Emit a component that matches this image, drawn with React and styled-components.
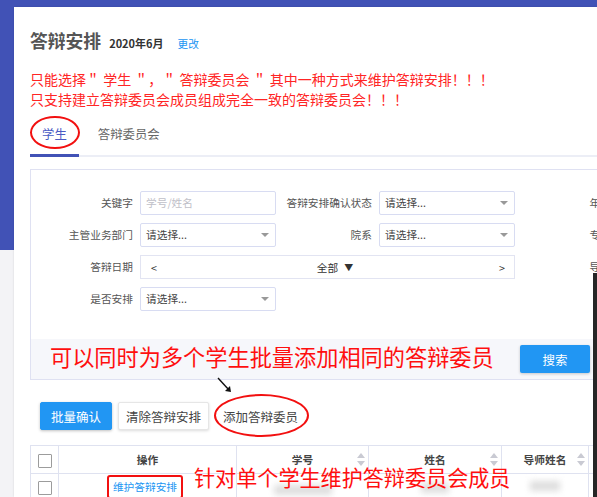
import React from "react";
import styled, { createGlobalStyle } from "styled-components";

const GlobalStyle = createGlobalStyle`
  html, body { margin: 0; padding: 0; }
  body {
    width: 597px;
    height: 497px;
    overflow: hidden;
    background: linear-gradient(#4152b6 0, #4152b6 250px, #f3f3f6 250px);
    font-family: "Noto Sans CJK SC", "Noto Sans", sans-serif;
  }
`;

const TopStrip = styled.div`
  height: 7px;
  overflow: hidden;
  padding-left: 26px;
`;

const Card = styled.div`
  margin-left: 14px;
  height: 490px;
  background: #fff;
  box-shadow: 0 0 2px rgba(0, 0, 0, 0.12);
  padding: 21px 0 0 16px;
  box-sizing: border-box;
  overflow: hidden;
`;

const TitleRow = styled.div`
  display: flex;
  align-items: baseline;
  height: 24px;
`;

const Title = styled.div`
  font-size: 17.8px;
  font-weight: bold;
  color: #555;
  line-height: 24px;
`;

const Month = styled.div`
  margin-left: 8px;
  font-size: 11px;
  font-weight: bold;
  color: #333;
`;

const EditLink = styled.a`
  margin-left: 14px;
  font-size: 10.7px;
  color: #2196f3;
`;

const Notice = styled.div`
  margin-top: 17px;
  font-size: 14px;
  line-height: 20px;
  color: #ff2525;
`;

const TabBar = styled.div`
  margin-top: 11px;
  display: flex;
  gap: 7px;
  border-bottom: 2px solid #eceef6;
`;

const Tab = styled.div`
  position: relative;
  padding: 5px 12px 11px;
  line-height: 18px;
  font-size: 12.4px;
  color: ${(p) => (p.$active ? "#4a5bc4" : "#666")};
  border-bottom: 3px solid ${(p) => (p.$active ? "#4152b6" : "transparent")};
  margin-bottom: -2px;

  ${(p) =>
    p.$circled &&
    `
    &::after {
      content: "";
      position: absolute;
      inset: -4px -1px 5px 0;
      border: 2px solid #f21010;
      border-radius: 50%;
    }
  `}
`;

const FilterPanel = styled.div`
  margin-top: 12px;
  border: 1px solid #dfe1f2;
  border-right: none;
`;

const FilterGrid = styled.div`
  display: grid;
  grid-template-columns: 109px 136px 103px 136px 103px 136px;
  grid-auto-rows: 24px;
  row-gap: 8px;
  padding: 21px 0 28px;
`;

const Label = styled.div`
  text-align: right;
  padding-right: 7px;
  font-size: 10.7px;
  line-height: 24px;
  color: #555;
  white-space: nowrap;
`;

const Field = styled.div`
  position: relative;
  box-sizing: border-box;
  border: 1px solid #d8dcf2;
  border-radius: 2px;
  padding: 0 5px;
  font-size: 10.7px;
  line-height: 22px;
  color: ${(p) => (p.$placeholder ? "#c0c0c8" : "#444")};

  ${(p) =>
    p.$select &&
    `
    &::after {
      content: "";
      position: absolute;
      right: 6px;
      top: 9px;
      border-left: 4px solid transparent;
      border-right: 4px solid transparent;
      border-top: 4px solid #999;
    }
  `}
`;

const DateRange = styled.div`
  grid-column: 2 / span 3;
  display: flex;
  justify-content: space-between;
  align-items: center;
  box-sizing: border-box;
  border: 1px solid #e2e4f2;
  padding: 0 9px 0 10px;
  font-size: 10.7px;
  color: #333;
`;

const DateCenter = styled.span`
  display: flex;
  align-items: center;
  gap: 6px;
  margin-left: 14px;
`;

const FilterFooter = styled.div`
  display: flex;
  align-items: center;
  height: 40px;
  background: #f6f7fb;
  padding: 0 7px 0 19px;
`;

const Callout = styled.div`
  font-size: ${(p) => p.$size}px;
  line-height: 1;
  color: #ff0f0f;
  white-space: nowrap;
`;

const FooterCallout = styled(Callout)`
  margin-bottom: 6px;
`;

const TableCallout = styled(Callout)`
  position: absolute;
  left: 164px;
  top: 22px;
`;

const SearchButton = styled.button`
  margin-left: auto;
  width: 70px;
  height: 28px;
  border: none;
  border-radius: 2px;
  background: #2196f3;
  color: #fff;
  font-family: inherit;
  font-size: 12.5px;
  box-shadow: 0 1px 3px rgba(0, 0, 0, 0.2);
`;

const Toolbar = styled.div`
  position: relative;
  margin-top: 22px;
  padding-left: 10px;
  display: flex;
  gap: 6px;
`;

const ToolButton = styled.button`
  position: relative;
  height: 28px;
  padding: 0 ${(p) => (p.$primary ? 10 : 7)}px;
  border: 1px solid ${(p) => (p.$primary ? "#2196f3" : "#e6e6e6")};
  border-radius: 2px;
  background: ${(p) => (p.$primary ? "#2196f3" : "#fff")};
  color: ${(p) => (p.$primary ? "#fff" : "#444")};
  font-family: inherit;
  font-size: 12.5px;
  box-shadow: 0 1px 3px rgba(0, 0, 0, ${(p) => (p.$primary ? 0.25 : 0.14)});

  ${(p) =>
    p.$circled &&
    `
    box-shadow: none;
    border-color: transparent;
    &::after {
      content: "";
      position: absolute;
      inset: -9px -4px -8px -2px;
      border: 2px solid #f21010;
      border-radius: 50%;
    }
  `}
`;

const Arrow = styled.svg`
  position: absolute;
  left: 184px;
  top: -27px;
`;

const TableWrap = styled.div`
  position: relative;
  margin-top: 15px;
`;

const Table = styled.table`
  border-collapse: collapse;
  table-layout: fixed;
  width: 700px;
`;

const Th = styled.th`
  position: relative;
  height: 27px;
  padding: 0;
  border: 1px solid #dfe2f0;
  font-size: 10.7px;
  font-weight: bold;
  color: #444;
  text-align: center;
`;

const Td = styled.td`
  height: 25px;
  padding: 0;
  border: 1px solid #dfe2f0;
  font-size: 10.7px;
  text-align: center;
  vertical-align: middle;
`;

const Check = styled.span`
  display: inline-block;
  width: 12px;
  height: 12px;
  border: 1.5px solid #9c9c9c;
  border-radius: 1px;
  vertical-align: middle;
`;

const SortIcon = styled.span`
  position: absolute;
  right: 3px;
  top: 7px;
  display: flex;
  flex-direction: column;
  gap: 3px;

  &::before,
  &::after {
    content: "";
    border-left: 4px solid transparent;
    border-right: 4px solid transparent;
  }
  &::before {
    border-bottom: 5px solid #c9cad3;
  }
  &::after {
    border-top: 5px solid #c9cad3;
  }
`;

const RowLink = styled.span`
  display: inline-block;
  padding: 2px 4px;
  line-height: 16px;
  color: #2196f3;
  border: 2px solid #f21010;
  border-radius: 3px;
  margin-right: 5px;
`;

const Smudge = styled.span`
  display: inline-block;
  width: ${(p) => p.$w}px;
  height: 10px;
  margin-top: ${(p) => p.$top}px;
  background: #dedede;
  filter: blur(3px);
`;

const EdgeBar = styled.div`
  position: fixed;
  right: 0;
  top: 273px;
  bottom: 0;
  width: 4px;
  background: #262626;
`;

function Select({ children = "请选择..." }) {
  return <Field $select>{children}</Field>;
}

function App() {
  return (
    <>
      <GlobalStyle />
      <TopStrip>
        <svg width="20" height="7">
          <ellipse cx="8" cy="-3" rx="6" ry="5" fill="none" stroke="#c9cdea" strokeWidth="1.2" />
        </svg>
      </TopStrip>
      <Card>
        <TitleRow>
          <Title>答辩安排</Title>
          <Month>2020年6月</Month>
          <EditLink>更改</EditLink>
        </TitleRow>
        <Notice>
          只能选择＂ 学生 ＂，＂ 答辩委员会 ＂ 其中一种方式来维护答辩安排！！！
          <br />
          只支持建立答辩委员会成员组成完全一致的答辩委员会！！！
        </Notice>
        <TabBar>
          <Tab $active $circled>学生</Tab>
          <Tab>答辩委员会</Tab>
        </TabBar>
        <FilterPanel>
          <FilterGrid>
            <Label>关键字</Label>
            <Field $placeholder>学号/姓名</Field>
            <Label>答辩安排确认状态</Label>
            <Select />
            <Label>年级</Label>
            <Select />

            <Label>主管业务部门</Label>
            <Select />
            <Label>院系</Label>
            <Select />
            <Label>专业</Label>
            <Select />

            <Label>答辩日期</Label>
            <DateRange>
              <span>&lt;</span>
              <DateCenter>
                全部 <span style={{ fontSize: 9 }}>▼</span>
              </DateCenter>
              <span>&gt;</span>
            </DateRange>
            <Label>导师</Label>
            <Select />

            <Label>是否安排</Label>
            <Select />
          </FilterGrid>
          <FilterFooter>
            <FooterCallout $size={22.2}>可以同时为多个学生批量添加相同的答辩委员</FooterCallout>
            <SearchButton>搜索</SearchButton>
          </FilterFooter>
        </FilterPanel>
        <Toolbar>
          <ToolButton $primary>批量确认</ToolButton>
          <ToolButton>清除答辩安排</ToolButton>
          <ToolButton $circled>添加答辩委员</ToolButton>
          <Arrow width="22" height="22" viewBox="0 0 22 22">
            <path d="M4 3 L15 15" stroke="#111" strokeWidth="1.4" />
            <path d="M11 16 L17 17 L16 11 Z" fill="#111" />
          </Arrow>
        </Toolbar>
        <TableWrap>
          <Table>
            <colgroup>
              <col style={{ width: 28 }} />
              <col style={{ width: 178 }} />
              <col style={{ width: 132 }} />
              <col style={{ width: 133 }} />
              <col style={{ width: 87 }} />
              <col style={{ width: 142 }} />
            </colgroup>
            <thead>
              <tr>
                <Th><Check /></Th>
                <Th>操作</Th>
                <Th>学号<SortIcon /></Th>
                <Th>姓名<SortIcon /></Th>
                <Th>导师姓名<SortIcon /></Th>
                <Th />
              </tr>
            </thead>
            <tbody>
              <tr>
                <Td><Check /></Td>
                <Td><RowLink>维护答辩安排</RowLink></Td>
                <Td><Smudge $w={58} $top={10} /></Td>
                <Td><Smudge $w={28} $top={6} /></Td>
                <Td><Smudge $w={30} $top={0} /></Td>
                <Td />
              </tr>
            </tbody>
          </Table>
          <TableCallout $size={21.1}>针对单个学生维护答辩委员会成员</TableCallout>
        </TableWrap>
      </Card>
      <EdgeBar />
    </>
  );
}

export default App;
